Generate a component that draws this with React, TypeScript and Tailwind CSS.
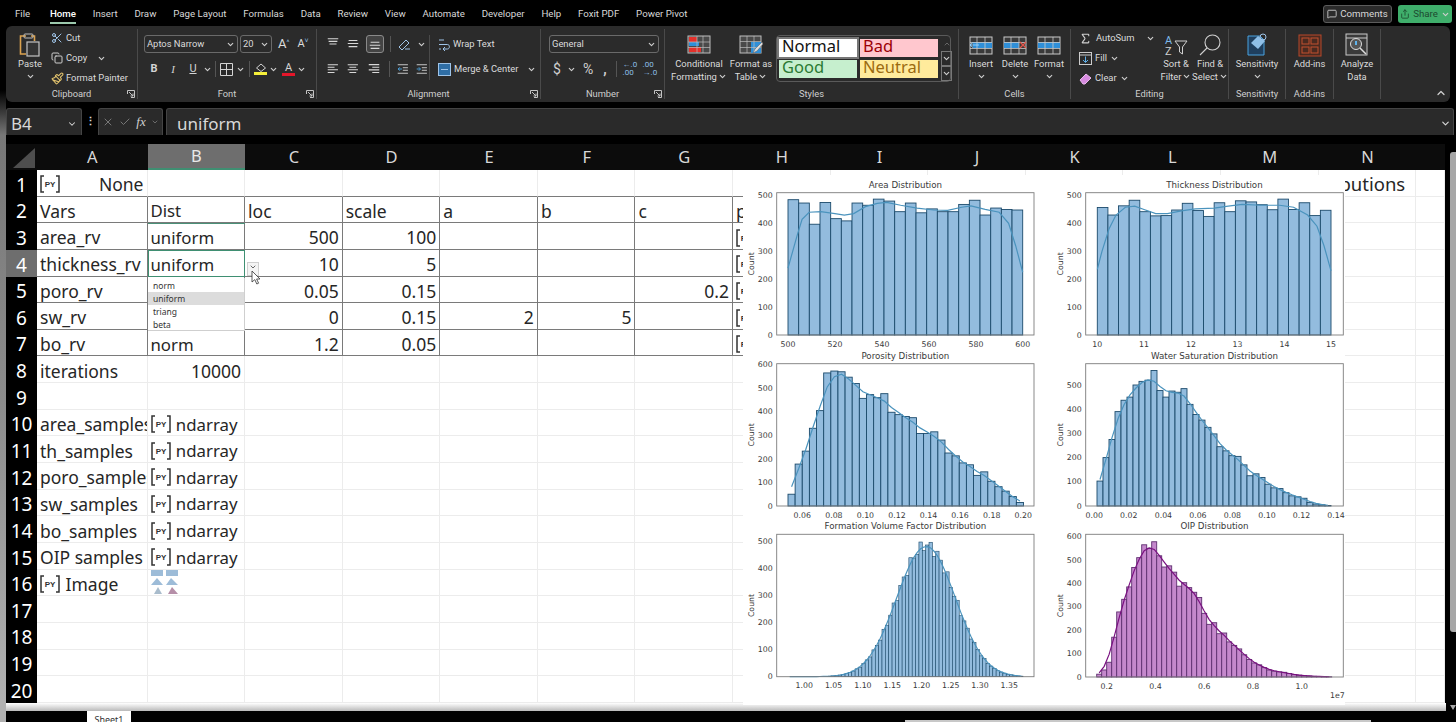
import type { ReactNode } from "react";
import { Check, ChevronDown, ChevronUp, Copy, MessageSquare, Paintbrush, Scissors, Share, Sigma, X } from "lucide-react";

const caretCls = "w-[9px] h-[9px] text-[#cfcfcf] shrink-0";

function Caret({ className = "" }: { className?: string }) {
  return <ChevronDown strokeWidth={3} className={`${caretCls} ${className}`} />;
}

function Launcher() {
  return (
    <svg width="8" height="8" viewBox="0 0 8 8" fill="none" stroke="#c4c4c4" strokeWidth="1">
      <path d="M.5 4V.5H7.5V7.5H4M2 2L6 6M6 3.5V6H3.5" />
    </svg>
  );
}

function Group({ w, label, launcher, children, className = "" }: { w: string; label?: string; launcher?: boolean; children?: ReactNode; className?: string }) {
  return (
    <div className={`${w} shrink-0 flex flex-col border-r border-[#4a4a4a] my-[3px] last:border-r-0`}>
      <div className={`h-[57px] shrink-0 flex ${className}`}>{children}</div>
      <div className="h-[13px] shrink-0 flex items-center justify-center relative pt-[3px] leading-[10px] text-[9.3px] text-[#cfcfcf]">
        {label}
        {launcher && (
          <span className="absolute right-[2px] top-[4px] leading-none">
            <Launcher />
          </span>
        )}
      </div>
    </div>
  );
}

function Big({ w, icon, lines, caret, textCaret }: { w: string; icon: ReactNode; lines: string[]; caret?: boolean; textCaret?: boolean }) {
  return (
    <div className={`${w} pt-[3px] flex flex-col items-center text-[9.4px] leading-[12.5px] text-[#dcdcdc] whitespace-nowrap`}>
      <div className="h-[26px] flex items-center justify-center">{icon}</div>
      {lines.map((l, i) => (
        <div key={l} className="flex items-center gap-[1px]">
          {l}
          {textCaret && i === lines.length - 1 && <Caret />}
        </div>
      ))}
      {caret && <Caret className="mt-[1px]" />}
    </div>
  );
}

function AlignLines({ kind }: { kind: "top" | "middle" | "bottom" | "left" | "center" | "right" }) {
  const d = {
    top: "M2 2H14M3 5H13M4 8H12",
    middle: "M3 4H13M2 7.5H14M3 11H13",
    bottom: "M3 6H13M2 9.5H14M3 13H13",
    left: "M2 3H14M2 6H10M2 9H14M2 12H10",
    center: "M2 3H14M4 6H12M2 9H14M4 12H12",
    right: "M2 3H14M6 6H14M2 9H14M6 12H14",
  }[kind];
  return (
    <svg width="14" height="14" viewBox="0 0 16 16" fill="none" stroke="#d8d8d8" strokeWidth="1.2">
      <path d={d} />
    </svg>
  );
}

function Indent({ right }: { right?: boolean }) {
  return (
    <svg width="14" height="14" viewBox="0 0 16 16" fill="none" stroke="#d0d0d0" strokeWidth="1.1">
      <path d="M2 3H14M8 6.5H14M8 9.5H14M2 13H14" />
      <path d={right ? "M2 8H6M4.5 6L6.5 8L4.5 10" : "M7 8H2.5M4.5 6L2.5 8L4.5 10"} stroke="#4aa3df" />
    </svg>
  );
}

function PasteIcon() {
  return (
    <svg width="26" height="26" viewBox="0 0 26 26" fill="none">
      <path d="M9 4H3.5V22H9" stroke="#dba24f" strokeWidth="1.6" />
      <path d="M14 4H17.5V9" stroke="#dba24f" strokeWidth="1.6" />
      <rect x="7" y="2" width="9" height="4" rx="1" stroke="#bdbdbd" />
      <rect x="10" y="10" width="12" height="14" fill="#333" stroke="#c4c4c4" strokeWidth="1.2" />
    </svg>
  );
}

function SheetIcon({ band, children }: { band: ReactNode; children?: ReactNode }) {
  return (
    <svg width="24" height="21" viewBox="0 0 24 21" fill="none">
      <rect x="1" y="2" width="22" height="17" fill="#3a3a3a" stroke="#c9c9c9" />
      {band}
      <path d="M1 7.5H23M1 13.5H23M8 2V19M16 2V19" stroke="#c9c9c9" strokeWidth=".8" />
      {children}
    </svg>
  );
}

function Py({ size = 22 }: { size?: number }) {
  return (
    <svg width={size} height="18" viewBox="0 0 22 18" className="shrink-0 -ml-[1px]" fill="none">
      <path d="M5 1H2V17H5M17 1H20V17H17" stroke="#333" strokeWidth="1.5" />
      <text x="11" y="12" textAnchor="middle" fontSize="8" fontWeight="700" fill="#333" fontFamily="Liberation Sans">PY</text>
    </svg>
  );
}

function Ribbon() {
  return (
    <div className="w-[1444px] h-[76px] rounded-md bg-[#2b2b2b] flex font-['Roboto',sans-serif] text-[#dcdcdc]">
      <Group w="w-[132px]" label="Clipboard" launcher>
        <div className="w-[40px] ml-[4px]">
          <Big w="w-[40px]" icon={<PasteIcon />} lines={["Paste"]} caret />
        </div>
        <div className="pl-[1px] pt-[1px] flex flex-col gap-[4px] text-[9.4px] whitespace-nowrap">
          <div className="h-[16px] flex items-center gap-[3px]"><Scissors className="w-[12px] h-[12px] text-[#9fc4e8]" />Cut</div>
          <div className="h-[16px] flex items-center gap-[3px]"><Copy className="w-[12px] h-[12px] text-[#cfcfcf]" />Copy<Caret className="ml-[7px]" /></div>
          <div className="h-[16px] flex items-center gap-[2px]"><Paintbrush className="w-[13px] h-[13px] text-[#e2c36e]" />Format Painter</div>
        </div>
      </Group>

      <Group w="w-[179px]" label="Font" launcher className="flex-col pl-[6px] pt-[6px] gap-[7px]">
        <div className="flex h-[18px] items-center gap-[2px]">
          <div className="w-[94px] h-[18px] rounded-[3px] border border-[#6a6a6a] flex items-center justify-between px-[2px] text-[9.4px]">Aptos Narrow<Caret /></div>
          <div className="w-[32px] h-[18px] rounded-[3px] border border-[#6a6a6a] flex items-center justify-between px-[2px] text-[9.4px]">20<Caret /></div>
          <span className="ml-[4px] text-[13px]">A<sup className="text-[7px] text-[#8fc0e8]">^</sup></span>
          <span className="ml-[6px] text-[11px]">A<sup className="text-[7px] text-[#8fc0e8]">˅</sup></span>
        </div>
        <div className="flex h-[18px] items-center text-[11px] text-[#d4d4d4]">
          <span className="w-[18px] ml-[1px] text-center font-bold">B</span>
          <span className="w-[20px] text-center italic font-['Liberation_Serif',serif]">I</span>
          <span className="w-[20px] text-center underline">U</span>
          <Caret />
          <span className="w-px h-[16px] bg-[#555] ml-[3px] mr-[4px]" />
          <svg width="13" height="13" viewBox="0 0 13 13" fill="none" stroke="#d4d4d4"><path d="M.5.5H12.5V12.5H.5ZM6.5.5V12.5M.5 6.5H12.5" /></svg>
          <Caret className="ml-[3px]" />
          <span className="w-px h-[16px] bg-[#555] mx-[4px]" />
          <span className="flex flex-col items-center w-[13px]">
            <svg width="12" height="9" viewBox="0 0 12 9" fill="none" stroke="#d4d4d4"><path d="M6 1L10.5 5L6 8.5L1.5 5Z" /></svg>
            <span className="w-[13px] h-[3px] bg-[#f5ef3a]" />
          </span>
          <Caret className="ml-[2px] mr-[4px]" />
          <span className="flex flex-col items-center w-[13px] leading-[10px] text-[11px]">A<span className="w-[13px] h-[3px] bg-[#e5162a]" /></span>
          <Caret className="ml-[2px]" />
        </div>
      </Group>

      <Group w="w-[224px]" label="Alignment" launcher className="pt-[6px]">
        <div className="w-[112px] flex flex-col gap-[7px] pl-[9px]">
          <div className="flex h-[18px] items-center gap-[6px]">
            <AlignLines kind="top" />
            <AlignLines kind="middle" />
            <span className="w-[18px] h-[18px] rounded-[3px] border border-[#8a8a8a] bg-[#444] flex items-center justify-center"><AlignLines kind="bottom" /></span>
            <span className="w-px h-[16px] bg-[#555]" />
            <svg width="14" height="14" viewBox="0 0 14 14" fill="none" stroke="#9fc4e8"><path d="M2 10L9 3L12 6L5 13ZM8 12H13" /></svg>
            <Caret />
          </div>
          <div className="flex h-[18px] items-center gap-[6px]">
            <AlignLines kind="left" />
            <AlignLines kind="center" />
            <span className="w-[18px] flex justify-center"><AlignLines kind="right" /></span>
            <span className="w-px h-[16px] bg-[#555]" />
            <Indent />
            <Indent right />
          </div>
        </div>
        <div className="border-l border-[#4a4a4a] h-[45px] pl-[8px] flex flex-col gap-[7px] text-[9.4px] whitespace-nowrap">
          <div className="h-[18px] flex items-center gap-[3px]">
            <svg width="12" height="13" viewBox="0 0 12 13" fill="none" stroke="#9fc4e8"><path d="M1 2H6M1 6.5H9.5C12 6.5 12 11 9.5 11H5M7 9L5 11L7 13M1 11H3" /></svg>
            Wrap Text
          </div>
          <div className="h-[18px] flex items-center gap-[3px]">
            <svg width="13" height="13" viewBox="0 0 13 13" fill="#2f6ea5" stroke="#9fc4e8"><rect x=".5" y=".5" width="12" height="12" /><path d="M3 6.5H10" /></svg>
            Merge &amp; Center
            <Caret className="ml-[6px]" />
          </div>
        </div>
      </Group>

      <Group w="w-[124px]" label="Number" launcher className="flex-col pl-[8px] pt-[6px] gap-[7px]">
        <div className="w-[110px] h-[18px] rounded-[3px] border border-[#6a6a6a] flex items-center justify-between px-[2px] text-[9.4px]">General<Caret /></div>
        <div className="flex h-[18px] items-center text-[14px] text-[#d0d0d0]">
          <span className="ml-[4px]">$</span>
          <Caret className="ml-[6px]" />
          <span className="ml-[7px]">%</span>
          <span className="ml-[10px] font-bold">,</span>
          <span className="w-px h-[16px] bg-[#555] ml-[9px] mr-[6px]" />
          <span className="text-[8px] leading-[8px] w-[13px] text-[#8fc0e8]">←.0<br />.00</span>
          <span className="text-[8px] leading-[8px] w-[13px] ml-[7px] text-[#8fc0e8]">.00<br />→.0</span>
        </div>
      </Group>

      <Group w="w-[294px]" label="Styles" className="pl-[4px]">
        <Big
          w="w-[60px]"
          lines={["Conditional", "Formatting"]}
          textCaret
          icon={
            <svg width="24" height="20" viewBox="0 0 24 20" fill="none">
              <rect x="1" y="1" width="22" height="17" fill="#4a4a4a" stroke="#bdbdbd" />
              <rect x="2" y="2" width="8" height="5" fill="#e4312b" /><rect x="2" y="7" width="10" height="4" fill="#2f8fd8" /><rect x="2" y="12" width="12" height="5" fill="#e4312b" />
              <path d="M1 7H23M1 12.5H23M10 1V18M16 1V18" stroke="#bdbdbd" strokeWidth=".7" />
            </svg>
          }
        />
        <Big
          w="w-[44px]"
          lines={["Format as", "Table"]}
          textCaret
          icon={
            <svg width="24" height="21" viewBox="0 0 24 21" fill="none">
              <rect x="1" y="1" width="21" height="17" fill="#4a4a4a" stroke="#bdbdbd" />
              <rect x="12" y="7" width="10" height="11" fill="#2f8fd8" />
              <path d="M1 6.5H22M1 12.5H22M8 1V18M15 1V18" stroke="#bdbdbd" strokeWidth=".7" />
              <path d="M23 7L16 14L14 18L18 16L24 9Z" fill="#ddd" stroke="#555" strokeWidth=".5" />
            </svg>
          }
        />
        <div className="ml-[3px] mt-[6px] w-[175px] h-[47px] rounded-[4px] border border-[#5a5a5a] pl-[2px] flex text-[16.5px] leading-[13px] font-['Noto_Sans',sans-serif]">
          <div className="grid grid-cols-[78px_78px] grid-rows-[18px_18px] gap-[3px] pt-[3px]">
            <div className="bg-white text-[#111] pl-[3px] outline-2 outline-[#777]">Normal</div>
            <div className="bg-[#ffc7ce] text-[#9c0006] pl-[3px]">Bad</div>
            <div className="bg-[#c6efce] text-[#2b7a33] pl-[3px]">Good</div>
            <div className="bg-[#ffeb9c] text-[#9c6a10] pl-[3px]">Neutral</div>
          </div>
          <div className="ml-[3px] w-[11px] flex flex-col items-center text-[#aaa]">
            <div className="h-[15px] flex items-center"><ChevronUp className="w-[8px] h-[8px] text-[#666]" strokeWidth={3} /></div>
            <div className="h-[15px] w-[11px] border border-[#777] flex items-center justify-center"><Caret /></div>
            <div className="h-[15px] w-[11px] border border-[#777] flex items-center justify-center"><Caret /></div>
          </div>
        </div>
      </Group>

      <Group w="w-[112px]" label="Cells" className="pl-[5px]">
        <Big w="w-[34px]" lines={["Insert"]} caret icon={<SheetIcon band={<rect x="4" y="7" width="19" height="6" fill="#2f8fd8" />}><path d="M10 10H1M4 7.5L1 10L4 12.5" stroke="#8fd0ff" /></SheetIcon>} />
        <Big w="w-[34px]" lines={["Delete"]} caret icon={<SheetIcon band={<rect x="1" y="7" width="15" height="6" fill="#2f8fd8" />}><path d="M17 7L23 13M23 7L17 13" stroke="#e4564a" strokeWidth="1.3" /></SheetIcon>} />
        <Big w="w-[34px]" lines={["Format"]} caret icon={<SheetIcon band={<rect x="1" y="7" width="22" height="6" fill="#2f8fd8" />} />} />
      </Group>

      <Group w="w-[158px]" label="Editing" className="pl-[8px]">
        <div className="w-[81px] pt-[1px] flex flex-col gap-[4px] text-[9.4px] whitespace-nowrap">
          <div className="h-[16px] flex items-center gap-[4px]"><Sigma className="w-[13px] h-[13px] text-[#d0d0d0]" />AutoSum<Caret className="ml-[7px]" /></div>
          <div className="h-[16px] flex items-center gap-[3px]">
            <svg width="13" height="13" viewBox="0 0 13 13" fill="none" stroke="#ccc"><rect x=".5" y=".5" width="12" height="12" /><path d="M.5 3H12.5" /><path d="M6.5 4.5V10M4 8L6.5 10.5L9 8" stroke="#5fb2ea" /></svg>
            Fill<Caret />
          </div>
          <div className="h-[16px] flex items-center gap-[3px]">
            <svg width="13" height="13" viewBox="0 0 13 13" fill="#d78be0" stroke="#e9b8ec"><path d="M1 8L7 2L12 6L6 12H4Z" /></svg>
            Clear<Caret />
          </div>
        </div>
        <Big
          w="w-[32px]"
          lines={["Sort &", "Filter"]}
          textCaret
          icon={
            <svg width="24" height="24" viewBox="0 0 24 24" fill="none">
              <text x="1" y="11" fontSize="11" fill="#7db9ea" fontFamily="Roboto">A</text>
              <text x="1" y="22" fontSize="11" fill="#d0d0d0" fontFamily="Roboto">Z</text>
              <path d="M11 8H23L18.5 14V21L15.5 19V14Z" stroke="#d0d0d0" />
            </svg>
          }
        />
        <Big
          w="w-[36px]"
          lines={["Find &", "Select"]}
          textCaret
          icon={
            <svg width="24" height="24" viewBox="0 0 24 24" fill="none" stroke="#d0d0d0" strokeWidth="1.1">
              <circle cx="14.5" cy="9.5" r="7.5" /><path d="M9 15L2 22" />
            </svg>
          }
        />
      </Group>

      <Group w="w-[57px]" label="Sensitivity">
        <Big
          w="w-[57px]"
          lines={["Sensitivity"]}
          caret
          icon={
            <svg width="22" height="24" viewBox="0 0 22 24" fill="none">
              <path d="M2 3H14L18 7V22H2Z" fill="#1f3f5e" stroke="#4aa3df" />
              <path d="M5 10L12 3L19 8L12 16Z" fill="#8fc0e8" />
              <circle cx="17" cy="4" r="3" stroke="#9fc4e8" />
            </svg>
          }
        />
      </Group>

      <Group w="w-[48px]" label="Add-ins">
        <Big
          w="w-[48px]"
          lines={["Add-ins"]}
          icon={
            <svg width="24" height="23" viewBox="0 0 24 23" fill="none">
              <rect x="1" y="1" width="22" height="21" fill="#4a2a20" stroke="#b8482a" />
              <rect x="4" y="4" width="7" height="6" stroke="#c2502f" /><rect x="13" y="4" width="7" height="6" stroke="#c2502f" />
              <rect x="4" y="13" width="7" height="6" stroke="#c2502f" /><rect x="13" y="13" width="7" height="6" stroke="#c2502f" />
            </svg>
          }
        />
      </Group>

      <Group w="w-[47px]" label="">
        <Big
          w="w-[47px]"
          lines={["Analyze", "Data"]}
          icon={
            <svg width="24" height="24" viewBox="0 0 24 24" fill="none">
              <rect x="1" y="1" width="21" height="21" stroke="#c9c9c9" fill="#3a3a3a" />
              <path d="M1 5H22" stroke="#c9c9c9" />
              <circle cx="11" cy="11" r="5.5" fill="#555" stroke="#ddd" />
              <path d="M11 8V12" stroke="#5fb2ea" strokeWidth="2" />
              <path d="M15 15L21 21" stroke="#ddd" strokeWidth="1.5" />
            </svg>
          }
        />
      </Group>

      <div className="flex-1 flex items-end justify-end pr-[3px] pb-[3px]">
        <ChevronUp className="w-[12px] h-[12px] text-[#cfcfcf]" strokeWidth={2.5} />
      </div>
    </div>
  );
}

const tabs = ["File", "Home", "Insert", "Draw", "Page Layout", "Formulas", "Data", "Review", "View", "Automate", "Developer", "Help", "Foxit PDF", "Power Pivot"];

const columns = ["A", "B", "C", "D", "E", "F", "G", "H", "I", "J", "K", "L", "M", "N", ""];

const cells: Record<string, ReactNode> = {
  A1: <><Py /><span className="ml-auto">None</span></>,
  N1: <span className="mr-[7px] text-[18.5px]">Distributions</span>,
  A2: "Vars", B2: "Dist", C2: "loc", D2: "scale", E2: "a", F2: "b", G2: "c", H2: "p",
  A3: "area_rv", B3: "uniform", C3: 500, D3: 100, H3: <Py />,
  A4: "thickness_rv", B4: "uniform", C4: 10, D4: 5, H4: <Py />,
  A5: "poro_rv", C5: 0.05, D5: 0.15, G5: 0.2, H5: <Py />,
  A6: "sw_rv", C6: 0, D6: 0.15, E6: 2, F6: 5, H6: <Py />,
  A7: "bo_rv", B7: "norm", C7: 1.2, D7: 0.05, H7: <Py />,
  A8: "iterations", B8: 10000,
  A10: "area_samples", A11: "th_samples", A12: "poro_samples", A13: "sw_samples", A14: "bo_samples", A15: "OIP samples",
  B10: <><Py />&nbsp;ndarray</>, B11: <><Py />&nbsp;ndarray</>, B12: <><Py />&nbsp;ndarray</>,
  B13: <><Py />&nbsp;ndarray</>, B14: <><Py />&nbsp;ndarray</>, B15: <><Py />&nbsp;ndarray</>,
  A16: <><Py />&nbsp;Image</>,
  B16: (
    <svg width="28" height="25" viewBox="0 0 28 25" className="-mt-[2px]">
      <rect x="0" y="0" width="12" height="6" fill="#9dbcd8" /><rect x="15" y="0" width="12" height="6" fill="#9dbcd8" />
      <path d="M0 15L6 8L12 15Z" fill="#9dbcd8" /><path d="M15 15L20 8L27 15Z" fill="#9dbcd8" />
      <path d="M3 24L7 17L11 24Z" fill="#a9bccc" /><path d="M17 24L21 17L27 24Z" fill="#b58fa8" />
    </svg>
  ),
};

type Chart = {
  title: string;
  frame: [number, number, number, number];
  zero: number;
  perUnit: number;
  yTicks: number[];
  xTicks: [string, number][];
  barStart: number;
  barEnd: number;
  counts: number[];
  kde?: [number, number][];
  fill: string;
  edge: string;
  line: string;
};

const blue = { fill: "#93bcde", edge: "#1b4a6b", line: "#4a93bd" };
const fvfCounts = Array.from({ length: 70 }, (_, i) => {
  const v = 0.97 + i * (0.405 / 70);
  return Math.min(497, Math.round(485 * Math.exp(-((v - 1.205) ** 2) / (2 * 0.05 ** 2)) * (1 + 0.05 * Math.sin(i * 2.3))));
});

const charts: Chart[] = [
  {
    title: "Area Distribution", frame: [776.7, 192.7, 1034, 335], zero: 335, perUnit: 0.279,
    yTicks: [0, 100, 200, 300, 400, 500],
    xTicks: [["500", 788], ["520", 835], ["540", 882], ["560", 929], ["580", 976], ["600", 1022.7]],
    barStart: 788, barEnd: 1022.7,
    counts: [485, 473, 397, 475, 417, 409, 473, 465, 487, 480, 442, 473, 438, 452, 442, 442, 468, 483, 430, 455, 450, 448],
    kde: [[0, 240], [0.02, 300], [0.04, 360], [0.06, 415], [0.09, 440], [0.14, 442], [0.2, 435], [0.24, 430], [0.28, 435], [0.33, 460], [0.38, 472], [0.42, 475], [0.48, 465], [0.55, 455], [0.62, 448], [0.68, 447], [0.74, 458], [0.78, 463], [0.84, 450], [0.9, 440], [0.94, 400], [0.97, 320], [1, 225]],
    ...blue,
  },
  {
    title: "Thickness Distribution", frame: [1085.7, 192.7, 1343.3, 335], zero: 335, perUnit: 0.279,
    yTicks: [0, 100, 200, 300, 400, 500],
    xTicks: [["10", 1097.3], ["11", 1144], ["12", 1191], ["13", 1237.5], ["14", 1284.5], ["15", 1331]],
    barStart: 1097.3, barEnd: 1331,
    counts: [457, 430, 463, 483, 442, 427, 428, 448, 472, 446, 425, 474, 442, 481, 477, 467, 449, 487, 450, 474, 428, 447],
    kde: [[0, 235], [0.02, 300], [0.05, 380], [0.08, 430], [0.12, 458], [0.16, 462], [0.2, 450], [0.25, 435], [0.3, 435], [0.36, 445], [0.42, 452], [0.5, 455], [0.56, 462], [0.62, 468], [0.7, 465], [0.78, 465], [0.84, 458], [0.9, 430], [0.94, 390], [0.97, 320], [1, 230]],
    ...blue,
  },
  {
    title: "Porosity Distribution", frame: [776.7, 363.7, 1034, 506], zero: 506, perUnit: 0.2355,
    yTicks: [0, 100, 200, 300, 400, 500, 600],
    xTicks: [["0.06", 802.3], ["0.08", 833.9], ["0.10", 865.4], ["0.12", 897], ["0.14", 928.5], ["0.16", 960], ["0.18", 991.7], ["0.20", 1023.3]],
    barStart: 788, barEnd: 1023.5,
    counts: [50, 178, 233, 330, 405, 565, 573, 570, 547, 520, 457, 473, 460, 477, 398, 388, 380, 375, 308, 308, 315, 280, 225, 213, 183, 175, 130, 145, 105, 82, 63, 40, 15],
    ...blue,
  },
  {
    title: "Water Saturation Distribution", frame: [1085.7, 363.7, 1343.3, 506], zero: 506, perUnit: 0.242,
    yTicks: [0, 100, 200, 300, 400, 500],
    xTicks: [["0.00", 1094.3], ["0.02", 1128.8], ["0.04", 1163.4], ["0.06", 1197.9], ["0.08", 1232.4], ["0.10", 1267], ["0.12", 1301.5], ["0.14", 1336]],
    barStart: 1097, barEnd: 1331,
    counts: [103, 200, 275, 390, 437, 450, 500, 515, 520, 560, 477, 450, 475, 470, 485, 420, 378, 355, 325, 298, 245, 228, 208, 205, 170, 125, 133, 118, 90, 75, 72, 55, 42, 38, 32, 15, 8, 5, 2],
    ...blue,
  },
  {
    title: "Formation Volume Factor Distribution", frame: [776.7, 534.3, 1034, 676.7], zero: 676.7, perUnit: 0.271,
    yTicks: [0, 100, 200, 300, 400, 500],
    xTicks: [["1.00", 804.3], ["1.05", 833.6], ["1.10", 862.9], ["1.15", 892.2], ["1.20", 921.5], ["1.25", 950.8], ["1.30", 980], ["1.35", 1009.3]],
    barStart: 788, barEnd: 1023,
    counts: fvfCounts,
    ...blue,
  },
  {
    title: "OIP Distribution", frame: [1085.7, 534.3, 1343.3, 677], zero: 677, perUnit: 0.234,
    yTicks: [0, 100, 200, 300, 400, 500, 600],
    xTicks: [["0.2", 1106.7], ["0.4", 1155.5], ["0.6", 1204.2], ["0.8", 1253], ["1.0", 1301.7]],
    barStart: 1096.7, barEnd: 1331.7,
    counts: [12, 30, 63, 170, 278, 332, 385, 468, 510, 565, 550, 578, 518, 470, 475, 448, 388, 403, 382, 362, 340, 272, 225, 232, 185, 188, 150, 135, 120, 95, 75, 60, 52, 40, 30, 25, 22, 20, 15, 10, 8, 6, 4, 3, 2, 2, 1],
    fill: "#c588cc", edge: "#5f2f70", line: "#7a1080",
  },
];

function kdePoints(c: Chart) {
  const bw = (c.barEnd - c.barStart) / c.counts.length;
  if (c.kde) {
    return c.kde.map(([f, v]) => `${c.barStart + f * (c.barEnd - c.barStart)},${c.zero - v * c.perUnit}`).join(" ");
  }
  const weights = [1, 2, 3, 2, 1];
  return c.counts
    .map((_, i) => {
      let sum = 0;
      weights.forEach((w, k) => {
        sum += (c.counts[i + k - 2] ?? 0) * w;
      });
      return `${c.barStart + (i + 0.5) * bw},${c.zero - (sum / 9) * c.perUnit}`;
    })
    .join(" ");
}

function Hist({ chart }: { chart: Chart }) {
  const [x0, y0, x1, y1] = chart.frame;
  const bw = (chart.barEnd - chart.barStart) / chart.counts.length;
  const thin = bw < 4;
  return (
    <g fontFamily="DejaVu Sans" fill="#3a3a3a">
      <text x={(x0 + x1) / 2} y={y0 - 5} textAnchor="middle" fontSize="8.7">{chart.title}</text>
      {chart.counts.map((c, i) => (
        <rect
          key={i}
          x={chart.barStart + i * bw}
          y={chart.zero - c * chart.perUnit}
          width={bw}
          height={c * chart.perUnit}
          fill={chart.fill}
          stroke={chart.edge}
          strokeWidth={thin ? 0.6 : 0.9}
        />
      ))}
      <polyline points={kdePoints(chart)} fill="none" stroke={chart.line} strokeWidth="1.2" />
      <rect x={x0} y={y0} width={x1 - x0} height={y1 - y0} fill="none" stroke="#7c7c7c" strokeWidth=".9" />
      {chart.yTicks.map((t) => (
        <text key={t} x={x0 - 4} y={chart.zero - t * chart.perUnit + 2.6} textAnchor="end" fontSize="7.8">{t}</text>
      ))}
      {chart.xTicks.map(([l, x]) => (
        <text key={l} x={x} y={y1 + 11.5} textAnchor="middle" fontSize="7.8">{l}</text>
      ))}
      <text transform={`translate(${x0 - 23} ${(y0 + y1) / 2}) rotate(-90)`} textAnchor="middle" fontSize="7.8">Count</text>
    </g>
  );
}

function ChartPanel() {
  return (
    <svg viewBox="743 175 602 530" width="602" height="530" className="absolute left-[737px] top-[31px] bg-white">
      {charts.map((c) => (
        <Hist key={c.title} chart={c} />
      ))}
      <text x="1330" y="698" fontSize="7.8" fontFamily="DejaVu Sans" fill="#3a3a3a">1e7</text>
    </svg>
  );
}

function Sheet() {
  const rows = Array.from({ length: 20 }, (_, i) => i + 1);
  return (
    <div className="relative">
      <div className="grid grid-cols-[31px_110.5px_repeat(13,97.6px)_29.2px] grid-rows-[26px_repeat(20,26.65px)] font-['Noto_Sans',sans-serif] text-[17.5px] text-[#262626]">
        <div className="bg-[#0c0c0c] flex items-end justify-end pr-[2px] pb-[2px]">
          <svg width="22" height="20" viewBox="0 0 22 20"><path d="M22 0V20H0Z" fill="#4e4e4e" /></svg>
        </div>
        {columns.map((c, i) => (
          <div
            key={`col-${i}`}
            className={`flex items-center justify-center pt-[1px] text-[16.5px] ${c === "B" ? "bg-[#6e6e6e] text-[#e8e8e8] border-b-2 border-[#3f8f72]" : "bg-[#0c0c0c] text-[#d8d8d8]"}`}
          >
            {c}
          </div>
        ))}
        {rows.map((r) => [
          <div key={`row-${r}`} className={`flex items-center justify-center pt-[3px] text-[19px] text-white ${r === 4 ? "bg-[#6e6e6e]" : "bg-black"}`}>
            {r}
          </div>,
          ...columns.map((c, ci) => {
            const key = `${c}${r}`;
            const v = cells[key];
            const darkRight = r >= 2 && r <= 7 && ci <= 6;
            const darkBottom = r <= 7 && ci <= 7;
            const endAlign = typeof v === "number" || key === "N1";
            const narrow = ci === 1 && typeof v !== "number";
            return (
              <div
                key={`${r}-${ci}`}
                className={`flex items-center overflow-hidden whitespace-nowrap pl-[3px] pr-[3px] pt-[3px] bg-white border-r border-b ${darkRight ? "border-r-[#7a7a7a]" : "border-r-[#ececec]"} ${darkBottom ? "border-b-[#7a7a7a]" : "border-b-[#ececec]"} ${endAlign ? "justify-end" : ""} ${narrow ? "text-[16.8px]" : ""}`}
              >
                {v}
              </div>
            );
          }),
        ])}
      </div>

      <div className="absolute left-[141.5px] top-[79.3px] w-[97.6px] h-[53.3px] border-t border-[#4a9078]" />
      <div className="absolute left-[141.5px] top-[106px] w-[97.6px] h-[27px] border-[1.5px] border-[#3f8f72]" />
      <div className="absolute left-[142px] top-[134px] w-[97px] h-[53px] bg-white border-b border-r border-[#cfcfcf] pt-[1px] font-['Noto_Sans',sans-serif] text-[8.5px] text-[#333]">
        {["norm", "uniform", "triang", "beta"].map((o) => (
          <div key={o} className={`h-[13px] leading-[13px] pl-[5px] ${o === "uniform" ? "bg-[#dcdcdc]" : ""}`}>{o}</div>
        ))}
      </div>
      <div className="absolute left-[241px] top-[118px] w-[12px] h-[14px] bg-[#f4f4f4] border border-[#cfcfcf] flex justify-center">
        <ChevronDown className="w-[8px] h-[8px] text-[#666]" strokeWidth={3} />
      </div>
      <svg width="10" height="15" viewBox="0 0 10 15" className="absolute left-[244.5px] top-[126px]">
        <path d="M1 1V12L3.8 9.6L5.8 14L7.6 13.2L5.6 9H9Z" fill="#fff" stroke="#333" strokeWidth=".8" />
      </svg>
      <ChartPanel />
    </div>
  );
}

export default function App() {
  return (
    <div className="w-[1456px] h-[722px] overflow-hidden flex bg-black">
      <div className="w-[6px] shrink-0 bg-[linear-gradient(to_bottom,#000_90px,#777_135px,#8c8c8c_400px,#b0b0b0_700px)]" />
      <div className="w-[1450px] flex flex-col">
        <div className="h-[26px] flex items-start pt-[6px] font-['Roboto',sans-serif] text-[9.7px] text-[#d8d8d8] pl-[9px] pr-[4px] gap-[16.8px]">
          {tabs.map((t) => (
            <div key={t} className={`h-[18px] flex items-center border-b-2 ${t === "Home" ? "ml-[3px] border-[#9cc9ad] text-white font-medium" : "border-transparent"}`}>
              {t}
            </div>
          ))}
          <div className="ml-auto -mt-[1px] flex items-center gap-[6px]">
            <div className="w-[69px] h-[18px] rounded-[3px] border border-[#5c5c5c] bg-[#2b2b2b] flex items-center justify-center gap-[3px]">
              <MessageSquare className="w-[10px] h-[10px]" />Comments
            </div>
            <div className="w-[54px] h-[18px] rounded-[3px] bg-[#3fae6b] text-[#1d4a2f] flex items-center justify-center gap-[3px]">
              <Share className="w-[10px] h-[10px]" />Share<Caret className="text-[#1d4a2f]" />
            </div>
          </div>
        </div>

        <Ribbon />

        <div className="h-[27px] mt-[6px] flex font-['Noto_Sans',sans-serif] text-[#d8d8d8]">
          <div className="w-[76px] bg-[#2a2a2a] border-t border-x border-[#444] rounded-t-[3px] flex items-center justify-between pl-[4px] pr-[4px] pt-[3px] text-[17px]">
            B4<ChevronDown className="w-[10px] h-[10px]" strokeWidth={2.5} />
          </div>
          <div className="w-[16px] flex items-center justify-center text-[11px] font-bold">⋮</div>
          <div className="w-[65px] bg-[#2a2a2a] border-t border-x border-[#444] rounded-t-[3px] flex items-center justify-center gap-[5px] text-[#777]">
            <X className="w-[12px] h-[12px]" />
            <Check className="w-[12px] h-[12px]" />
            <span className="font-['Liberation_Serif',serif] italic text-[13px] text-[#d0d0d0]">fx</span>
            <ChevronDown className="w-[8px] h-[8px]" strokeWidth={2.5} />
          </div>
          <div className="ml-[3px] w-[1288px] bg-[#2a2a2a] border-t border-x border-[#444] rounded-t-[3px] flex items-center justify-between pl-[10px] pr-[2px] pt-[3px] text-[17px]">
            uniform<ChevronDown className="w-[11px] h-[11px]" strokeWidth={2.5} />
          </div>
        </div>

        <div className="h-[578px] mt-[9px] flex">
          <div className="w-[1439.5px] shrink-0 flex flex-col">
            <Sheet />
            <div className="h-[8px] bg-[linear-gradient(to_bottom,#fff,#b9b9b9)]" />
            <div className="h-[11px] flex font-['Noto_Sans',sans-serif] text-[9px] text-[#333] bg-black">
              <div className="w-[81px]" />
              <div className="w-[44px] bg-white flex justify-center leading-[18px] overflow-hidden">Sheet1</div>
              <div className="flex-1 flex flex-col justify-end">
                <div className="h-[2px] ml-[774px] mr-[75px] bg-[#c8c8c8]" />
              </div>
            </div>
          </div>
          <div className="flex-1 bg-black flex flex-col items-end pt-[8px]">
            <div className="w-[6px] h-[480px] rounded-l-[3px] bg-[#a6a6a6]" />
            <div className="w-[6px] mt-[73px] border-x-[3px] border-x-transparent border-t-[5px] border-t-[#a6a6a6]" />
          </div>
        </div>
      </div>
    </div>
  );
}
